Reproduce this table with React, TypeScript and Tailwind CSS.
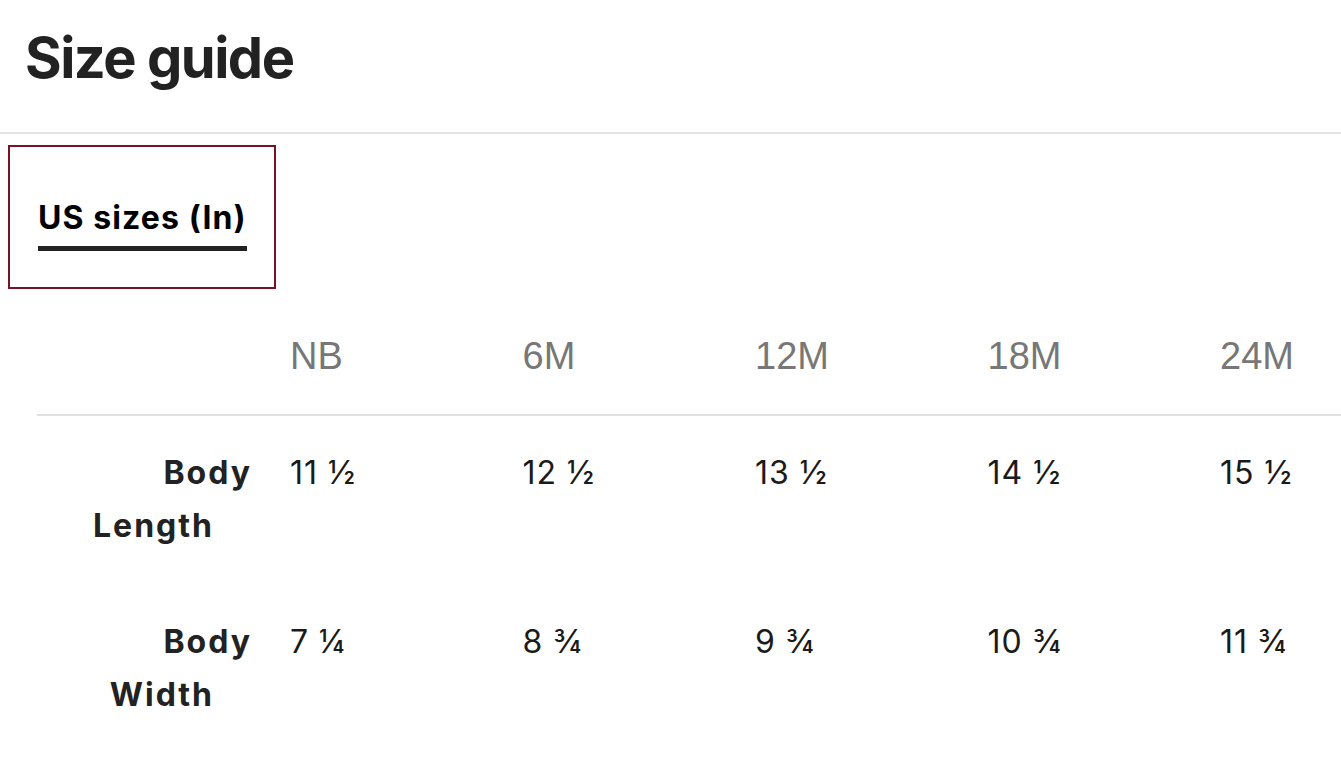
const sizes = ['NB', '6M', '12M', '18M', '24M']

const rows = [
  { label: ['Body', 'Length'], values: ['11 ½', '12 ½', '13 ½', '14 ½', '15 ½'] },
  { label: ['Body', 'Width'], values: ['7 ¼', '8 ¾', '9 ¾', '10 ¾', '11 ¾'] },
]

export default function App() {
  return (
    <div className="w-[1341px] h-[764px] overflow-hidden bg-white text-[#222] font-['Inter',sans-serif]">
      <div className="h-[134px] border-b-2 border-[#e4e4e4] px-[25px] pt-[23px]">
        <h1 className="text-[56px] leading-[70px] font-bold tracking-[-1.5px]">Size guide</h1>
      </div>

      <div className="pt-[11px] pl-[8px]">
        <div className="w-[268px] h-[144px] border-2 border-[#7a1226] pl-[28px] pt-[52px]">
          <div className="inline-block">
            <span className="block text-[32px] leading-[38px] font-bold text-black tracking-[1.1px]">US sizes (In)</span>
            <div className="mt-[9px] h-[5px] bg-[#222]" />
          </div>
        </div>
      </div>

      <div className="ml-[37px]">
        <div className="flex border-b-2 border-[#e0e0e0] pt-[45px] pb-[36px]">
          <div className="w-[253px] shrink-0" />
          {sizes.map((s) => (
            <div key={s} className="w-[232.5px] shrink-0 text-[38px] leading-[44px] text-[#777] font-['Liberation_Sans',Arial,sans-serif]">
              {s}
            </div>
          ))}
        </div>

        <div className="flex flex-col gap-[63px] pt-[30px]">
          {rows.map((r) => (
            <div key={r.label.join(' ')} className="flex text-[32px] leading-[53px]">
              <div className="w-[253px] shrink-0 pr-[38px] text-right font-bold tracking-[2px]">
                <div>{r.label[0]}</div>
                <div className="pr-[38px]">{r.label[1]}</div>
              </div>
              {r.values.map((v, i) => (
                <div key={i} className="w-[232.5px] shrink-0 text-[#1a1a1a] tracking-[1px]">
                  {v}
                </div>
              ))}
            </div>
          ))}
        </div>
      </div>
    </div>
  )
}
